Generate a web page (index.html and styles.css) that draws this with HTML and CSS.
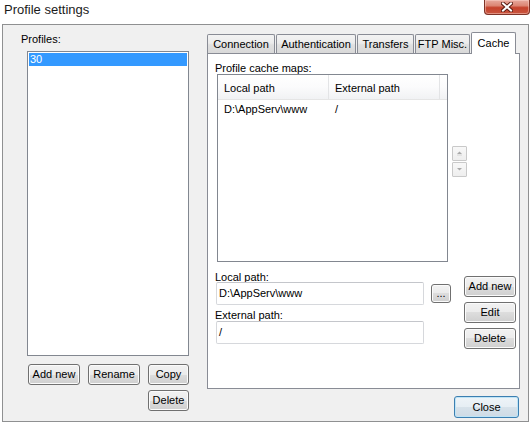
FILE: index.html
```html
<!DOCTYPE html>
<html>
<head>
<meta charset="utf-8">
<link rel="stylesheet" href="styles.css">
</head>
<body>
<div class="titlebar">
  <span class="title">Profile settings</span>
  <div class="caption-close">
    <svg width="12" height="10" viewBox="0 0 12 10">
      <path d="M2 1.5 L10 8.5 M10 1.5 L2 8.5" stroke="#5a1c12" stroke-width="4" stroke-linecap="square"/>
      <path d="M2 1.5 L10 8.5 M10 1.5 L2 8.5" stroke="#ffffff" stroke-width="2" stroke-linecap="square"/>
    </svg>
  </div>
</div>
<div class="window">
  <div class="left">
    <div class="label">Profiles:</div>
    <div class="listbox"><div class="item selected">30</div></div>
    <div class="btn-grid">
      <button class="btn">Add new</button>
      <button class="btn">Rename</button>
      <button class="btn">Copy</button>
      <button class="btn btn-last">Delete</button>
    </div>
  </div>
  <div class="right">
    <div class="tabs">
      <div class="tab tab-conn">Connection</div>
      <div class="tab tab-auth">Authentication</div>
      <div class="tab tab-trans">Transfers</div>
      <div class="tab tab-ftp">FTP Misc.</div>
      <div class="tab tab-cache active">Cache</div>
    </div>
    <div class="panel">
      <div class="plabel">Profile cache maps:</div>
      <div class="maps-row">
        <div class="listview">
          <div class="lv-header">
            <div class="col c1">Local path</div>
            <div class="col c2">External path</div>
            <div class="col c3"></div>
          </div>
          <div class="lv-row">
            <div class="cell c1">D:\AppServ\www</div>
            <div class="cell c2">/</div>
          </div>
        </div>
        <div class="spin">
          <div class="spin-btn"><svg width="7" height="5" viewBox="0 0 7 5"><path d="M3.5 0.5 L6 3 L1 3 Z" fill="#a9a9a9"/><path d="M1 4 L6 4" stroke="#d6d6d6" stroke-width="1"/></svg></div>
          <div class="spin-btn"><svg width="7" height="5" viewBox="0 0 7 5"><path d="M1 1 L6 1 L3.5 3.5 Z" fill="#a9a9a9"/></svg></div>
        </div>
      </div>
      <div class="edit-row">
        <div class="fields">
          <div class="flabel">Local path:</div>
          <div class="field-line">
            <div class="input">D:\AppServ\www</div>
            <button class="btn btn-browse">...</button>
          </div>
          <div class="flabel second">External path:</div>
          <div class="input input-ext">/</div>
        </div>
        <div class="side-btns">
          <button class="btn btn-side">Add new</button>
          <button class="btn btn-side">Edit</button>
          <button class="btn btn-side">Delete</button>
        </div>
      </div>
    </div>
    <div class="footer"><button class="btn btn-default">Close</button></div>
  </div>
</div>
</body>
</html>
```
FILE: styles.css
```css
html, body {
  margin: 0;
  padding: 0;
}
body {
  background: #ffffff;
  font-family: "Liberation Sans", Arial, sans-serif;
  font-size: 11px;
  color: #000;
  width: 531px;
  height: 425px;
  overflow: hidden;
}

/* title bar */
.titlebar {
  height: 24px;
  display: flex;
  justify-content: space-between;
  align-items: flex-start;
}
.title {
  font-size: 13px;
  line-height: 16px;
  padding: 2px 0 0 4px;
  color: #1b1b1b;
  text-shadow: 0 0 5px #ffffff;
}
.caption-close {
  width: 46px;
  height: 15px;
  margin-right: 1px;
  box-sizing: border-box;
  border: 1px solid #7e3327;
  border-top: none;
  border-radius: 0 0 4px 4px;
  background: linear-gradient(#e7aa9e 0%, #dc8674 40%, #c5422c 55%, #c95640 100%);
  box-shadow: inset 0 0 0 1px rgba(255, 220, 210, 0.45);
  display: flex;
  align-items: center;
  justify-content: center;
}

/* window */
.window {
  margin-left: 2px;
  width: 527px;
  height: 398px;
  box-sizing: border-box;
  border: 1px solid #8f9091;
  background: #f0f0f0;
  display: flex;
  padding: 7px 8px 0 18px;
}

.left {
  width: 168px;
  margin-top: 1px;
  display: flex;
  flex-direction: column;
}
.label {
  line-height: 13px;
  height: 13px;
}
.listbox {
  margin-top: 5px;
  margin-left: 6px;
  width: 162px;
  height: 305px;
  box-sizing: border-box;
  border: 1px solid #828790;
  background: #fff;
  padding: 1px;
}
.item {
  height: 13px;
  line-height: 13px;
  padding-left: 1px;
}
.item.selected {
  background: #3399ff;
  color: #fff;
}

.btn-grid {
  margin-top: 8px;
  margin-left: 7px;
  display: grid;
  grid-template-columns: 52px 52px 41px;
  grid-auto-rows: 21px;
  column-gap: 8px;
  row-gap: 5px;
}
.btn-last {
  grid-column: 3;
}

.btn {
  font-family: "Liberation Sans", Arial, sans-serif;
  font-size: 11px;
  line-height: 13px;
  color: #000;
  padding: 0;
  margin: 0;
  box-sizing: border-box;
  border: 1px solid #707070;
  border-radius: 3px;
  background: linear-gradient(#f2f2f2 0%, #ebebeb 50%, #dddddd 50%, #cfcfcf 100%);
  box-shadow: inset 0 0 0 1px #fbfbfb;
  text-align: center;
}

/* right */
.right {
  width: 313px;
  margin-left: 18px;
  display: flex;
  flex-direction: column;
}
.tabs {
  height: 21px;
  display: flex;
  align-items: flex-end;
  gap: 1px;
}
.tab {
  height: 19px;
  box-sizing: border-box;
  border: 1px solid #898c95;
  border-bottom: none;
  border-radius: 2px 2px 0 0;
  background: linear-gradient(#f3f3f3 0%, #ececec 45%, #e0e0e0 55%, #d9d9d9 100%);
  text-align: center;
  line-height: 13px;
  padding-top: 3px;
}
.tab-conn { width: 68px; }
.tab-auth { width: 80px; }
.tab-trans { width: 57px; }
.tab-ftp { width: 55px; }
.tab-cache { width: 45px; }
.tab.active {
  height: 22px;
  margin-bottom: -1px;
  background: #ffffff;
  position: relative;
  z-index: 1;
  padding-top: 4px;
}

.panel {
  height: 336px;
  box-sizing: border-box;
  border: 1px solid #898c95;
  background: #ffffff;
  padding: 8px 0 0 7px;
}
.plabel {
  line-height: 12px;
  height: 12px;
}
.maps-row {
  display: flex;
  align-items: flex-start;
}
.listview {
  margin-left: 2px;
  width: 231px;
  height: 188px;
  box-sizing: border-box;
  border: 1px solid #828790;
  background: #fff;
}
.lv-header {
  height: 25px;
  box-sizing: border-box;
  display: flex;
  border-bottom: 1px solid #e5e5e5;
  background: linear-gradient(#ffffff 0%, #fbfbfc 50%, #f1f2f4 100%);
}
.col {
  box-sizing: border-box;
  line-height: 13px;
  padding-top: 7px;
  padding-left: 6px;
  border-right: 1px solid #e3e4e6;
}
.col.c1 { width: 111px; }
.col.c2 { width: 111px; }
.col.c3 { flex: 1; border-right: none; padding: 0; }
.lv-row {
  display: flex;
  height: 17px;
}
.cell {
  box-sizing: border-box;
  line-height: 13px;
  padding-top: 3px;
  padding-left: 6px;
}
.cell.c1 { width: 111px; }

.spin {
  margin-left: 4px;
  margin-top: 72px;
  display: flex;
  flex-direction: column;
  gap: 1px;
}
.spin-btn {
  width: 15px;
  height: 15px;
  box-sizing: border-box;
  border: 1px solid #c9c9c9;
  border-radius: 1px;
  background: linear-gradient(#f8f8f8, #eeeeee);
  display: flex;
  align-items: center;
  justify-content: center;
}

.edit-row {
  margin-top: 10px;
  display: flex;
  align-items: flex-start;
}
.fields {
  width: 236px;
  display: flex;
  flex-direction: column;
}
.flabel {
  line-height: 10px;
  height: 10px;
}
.flabel.second {
  margin-top: 5px;
}
.field-line {
  display: flex;
  align-items: center;
  height: 23px;
}
.input {
  width: 208px;
  height: 23px;
  margin-left: 1px;
  box-sizing: border-box;
  border: 1px solid #d6d8dc;
  border-top-color: #c4c6cb;
  border-radius: 2px;
  background: #fff;
  line-height: 13px;
  padding: 4px 0 0 2px;
}
.input-ext {
  margin-top: 1px;
}
.btn-browse {
  width: 20px;
  height: 19px;
  margin-left: 7px;
  line-height: 15px;
}
.side-btns {
  margin-left: 13px;
  margin-top: 4px;
  display: flex;
  flex-direction: column;
  gap: 5px;
}
.btn-side {
  width: 52px;
  height: 21px;
}

.footer {
  margin-top: 7px;
  display: flex;
  justify-content: flex-end;
  padding-right: 1px;
}
.btn-default {
  width: 65px;
  height: 22px;
  border-color: #3c7fb1;
  box-shadow: inset 0 0 0 1px #bfe4f6;
  background: linear-gradient(#eef4f8 0%, #e6eef4 50%, #d7e2ea 50%, #cfdbe5 100%);
}
```
